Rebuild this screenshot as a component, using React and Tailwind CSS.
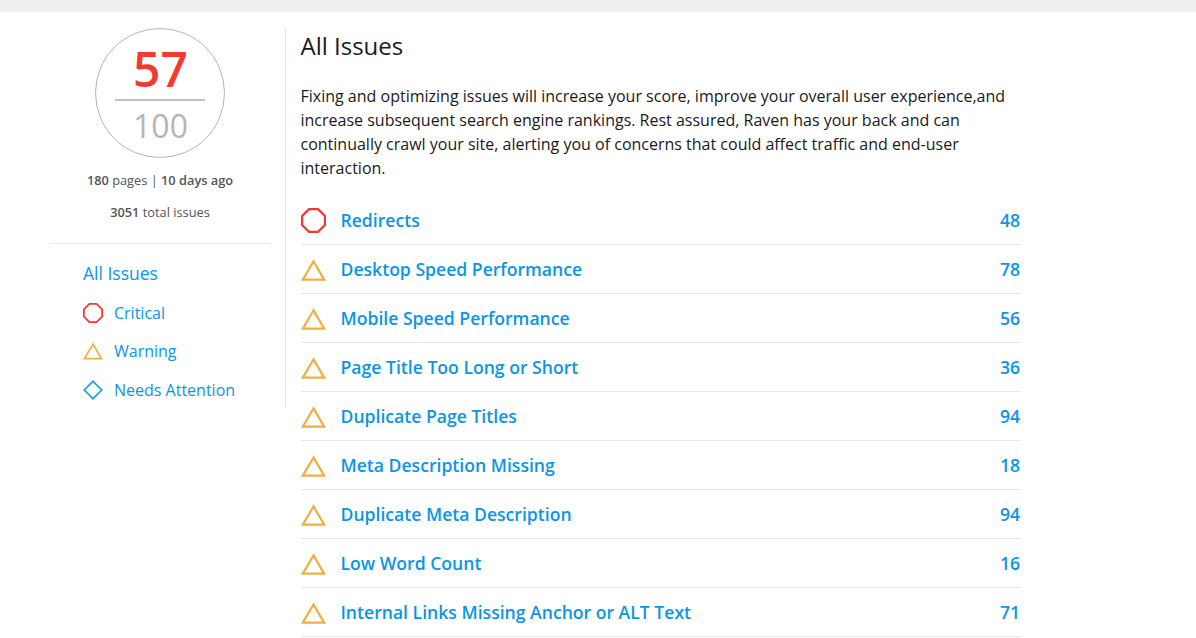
const issues = [
  { name: "Redirects", count: 48, type: "critical" },
  { name: "Desktop Speed Performance", count: 78 },
  { name: "Mobile Speed Performance", count: 56 },
  { name: "Page Title Too Long or Short", count: 36 },
  { name: "Duplicate Page Titles", count: 94 },
  { name: "Meta Description Missing", count: 18 },
  { name: "Duplicate Meta Description", count: 94 },
  { name: "Low Word Count", count: 16 },
  { name: "Internal Links Missing Anchor or ALT Text", count: 71 },
];

function Octagon({ className }) {
  return (
    <svg viewBox="0 0 25 25" fill="none" stroke="#f4392f" strokeWidth="2.2" className={className}>
      <polygon points="8,1.1 17,1.1 23.9,8 23.9,17 17,23.9 8,23.9 1.1,17 1.1,8" />
    </svg>
  );
}

function Triangle({ className }) {
  return (
    <svg viewBox="0 0 25 22" fill="none" stroke="#eeb044" strokeWidth="2.2" className={className}>
      <polygon points="12.5,2.4 23.2,20.6 1.8,20.6" />
    </svg>
  );
}

function Diamond({ className }) {
  return (
    <svg viewBox="0 0 25 25" fill="none" stroke="#1ba6dc" strokeWidth="2.2" className={className}>
      <polygon points="12.5,1.6 23.4,12.5 12.5,23.4 1.6,12.5" />
    </svg>
  );
}

export default function App() {
  return (
    <div className="h-screen overflow-hidden bg-white font-['Open_Sans',sans-serif]">
      <div className="h-3 bg-[#efefef]" />
      <div className="flex items-start pt-4 pl-[51px]">
        <aside className="w-[219px] shrink-0">
          <div className="flex flex-col items-center pr-px">
            <div className="w-[130px] h-[130px] rounded-full border border-[#b5b5b5] flex flex-col items-center">
              <div className="mt-[9px] pl-px text-[48px] leading-[61px] font-semibold text-[#f4392f]">57</div>
              <div className="w-[90px] h-0.5 bg-[#c2c2c2]" />
              <div className="pl-px pt-px text-[32px] leading-[48px] text-[#b5b5b5]">100</div>
            </div>
            <p className="mt-[12px] text-[12.8px] leading-[20px] text-[#555]">
              <span className="font-semibold">180</span> pages | <span className="font-semibold">10 days ago</span>
            </p>
            <p className="mt-[12px] text-[12.8px] leading-[20px] text-[#555]">
              <span className="font-semibold">3051</span> total issues
            </p>
          </div>
          <div className="mt-[21px] border-t border-[#e9e9e9] pl-8 pt-[17px] text-[#0c95e5]">
            <div className="text-[17.5px] leading-[24px]">All Issues</div>
            <div className="mt-[16px] flex items-center gap-[11px] text-[16px] leading-[24px]">
              <Octagon className="w-5 h-5" />
              Critical
            </div>
            <div className="mt-[14px] flex items-center gap-[11px] text-[16px] leading-[24px]">
              <Triangle className="w-5 h-[18px]" />
              Warning
            </div>
            <div className="mt-[15px] flex items-center gap-[11px] text-[16px] leading-[24px]">
              <Diamond className="w-5 h-5" />
              Needs Attention
            </div>
          </div>
        </aside>
        <div className="ml-[15px] w-px h-[380px] bg-[#e6e6e6] shrink-0" />
        <main className="ml-[15px] w-[720px] shrink-0">
          <h1 className="-ml-[0.5px] text-[24px] leading-[36px] text-[#1a1a1a]">All Issues</h1>
          <p className="-ml-[0.5px] mt-[20px] text-[16px] leading-[24px] text-[#1a1a1a]">
            Fixing and optimizing issues will increase your score, improve your overall user experience,and increase subsequent search engine rankings. Rest assured, Raven has your back and can continually crawl your site, alerting you of concerns that could affect traffic and end-user interaction.
          </p>
          <ul className="mt-[16px]">
            {issues.map((issue) => (
              <li key={issue.name} className="h-[49px] pt-[1px] border-b border-[#e6e6e6] flex items-center text-[17.6px] font-semibold text-[#0c95e5]">
                {issue.type === "critical" ? (
                  <Octagon className="w-[25px] h-[25px]" />
                ) : (
                  <Triangle className="w-[25px] h-[22px]" />
                )}
                <span className="ml-[14.5px] flex-1">{issue.name}</span>
                <span className="mr-px">{issue.count}</span>
              </li>
            ))}
          </ul>
        </main>
      </div>
    </div>
  );
}
